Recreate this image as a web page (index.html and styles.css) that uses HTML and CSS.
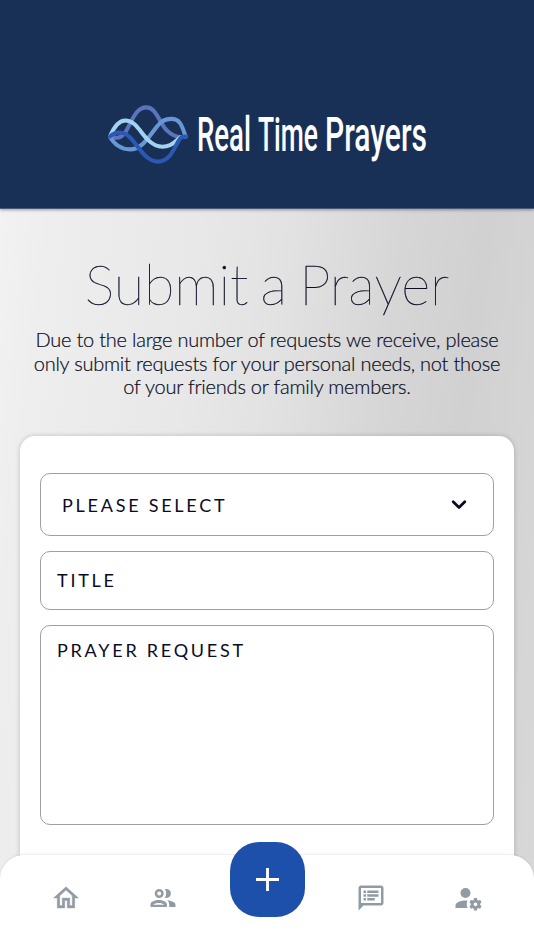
FILE: index.html
```html
<!DOCTYPE html>
<html lang="en">
<head>
<meta charset="utf-8">
<title>Real Time Prayers</title>
<link rel="stylesheet" href="styles.css">
</head>
<body>
<div class="app">
  <header class="header">
    <svg class="mark" viewBox="0 0 240 180" fill="none" stroke-width="12" stroke-linecap="round">
      <path stroke="#5b74bd" d="M5 93C24 99 38 99 51 79C70 49 80 7 112 7C142 7 148 49 172 74C190 92 208 98 228 93"/>
      <path stroke="#6797d5" d="M5 93C17 116 39 131 63 131C102 131 120 91 144 63C153 50 170 41 186 41C215 41 219 69 228 93"/>
      <path stroke="#a3d3f1" d="M5 93C17 64 30 46 50 46C81 46 93 80 117 103C130 116 143 123 160 123C193 123 201 101 214 95"/>
      <path stroke="#2b58b2" d="M5 93C17 81 30 79 44 83C79 91 98 167 147 167C189 167 199 108 216 95L228 93"/>
    </svg>
    <svg class="wordmark" viewBox="0 0 240 60">
      <text x="0" y="39" textLength="54" lengthAdjust="spacingAndGlyphs">Real</text>
      <text x="61" y="39" textLength="60" lengthAdjust="spacingAndGlyphs">Time</text>
      <text x="128" y="39" textLength="102" lengthAdjust="spacingAndGlyphs">Prayers</text>
    </svg>
  </header>
  <main class="main">
    <h1 class="title">Submit a Prayer</h1>
    <p class="intro">Due to the large number of requests we receive, please<br>only submit requests for your personal needs, not those<br>of your friends or family members.</p>
    <form class="card">
      <div class="field select"><span>PLEASE SELECT</span>
        <svg class="chevron" viewBox="0 0 16 12" fill="none"><path d="M2.200 2.700 8 8.400l5.800-5.700" stroke="#0a0a20" stroke-width="2.800" stroke-linecap="round" stroke-linejoin="round"/></svg>
      </div>
      <div class="field input">TITLE</div>
      <div class="field area">PRAYER REQUEST</div>
    </form>
  </main>
  <nav class="nav">
    <a class="item"><svg viewBox="0 0 24 24"><path stroke="#929ba4" stroke-width=".3" d="M12 5.690l5 4.500V18h-2v-6H9v6H7v-7.810l5-4.500M12 3 2 12h3v8h6v-6h2v6h6v-8h3L12 3z"/></svg></a>
    <a class="item"><svg class="people" viewBox="-2.500 -6 30 30"><path fill-rule="evenodd" d="M8.700 0a4.500 4.500 0 1 1 0 9 4.500 4.500 0 0 1 0-9zm0 2.500a2 2 0 1 0 0 4 2 2 0 0 0 0-4zM14.300 .3A4.500 4.500 0 1 1 14.300 8.700C16.200 6.200 16.200 2.800 14.300 .3zM0 18v-2.300C0 12.500 4.500 11 8.200 11s8.200 1.500 8.200 4.700V18zm2.800-2.200h10.800c-.9-1.300-3.200-1.900-5.400-1.900s-4.500.6-5.400 1.900zM16.800 11.200C20.500 11.600 25 13 25 15.700V18h-6.300v-2.300c0-1.900-.7-3.300-1.900-4.500z"/></svg></a>
    <a class="add"><svg viewBox="0 0 24 24"><path d="M10.500 0h3v10.500H24v3H13.500V24h-3V13.500H0v-3h10.500z"/></svg></a>
    <a class="item"><svg class="message" viewBox="0 0 24 24"><path d="M20 2H4c-1.100 0-2 .9-2 2v18l4-4h14c1.100 0 2-.9 2-2V4c0-1.100-.9-2-2-2zm0 14H4V4h16v12zM6 12h2v2H6zM6 9h2v2H6zM6 6h2v2H6zM9 12h6v2H9zM9 9h9v2H9zM9 6h9v2H9z"/></svg></a>
    <a class="item"><svg class="account" viewBox="0 0 24 24"><path d="M10 4a4 4 0 0 1 4 4 4 4 0 0 1-4 4 4 4 0 0 1-4-4 4 4 0 0 1 4-4m7 8a.26.26 0 0 0-.25.210l-.190 1.320c-.3.130-.59.290-.850.470l-1.240-.5c-.110 0-.240 0-.310.130l-1 1.730c-.060.110-.040.240.060.320l1.060.82a4.200 4.200 0 0 0 0 1l-1.060.82a.26.26 0 0 0-.060.320l1 1.730c.060.130.190.130.310.130l1.240-.5c.26.180.540.350.850.470l.190 1.320c.020.120.120.210.250.210h2c.110 0 .220-.090.240-.210l.190-1.320c.3-.130.570-.290.840-.470l1.230.5c.130 0 .260 0 .330-.130l1-1.730a.26.26 0 0 0-.060-.320l-1.070-.82c.020-.170.040-.330.040-.5s-.010-.330-.040-.5l1.060-.82a.26.26 0 0 0 .060-.320l-1-1.730c-.060-.130-.190-.130-.320-.130l-1.230.5c-.27-.180-.540-.350-.850-.470l-.190-1.320A.236.236 0 0 0 19 12h-2m-7 2c-4.420 0-8 1.790-8 4v2h9.680a7 7 0 0 1-.680-3 7 7 0 0 1 .640-2.910c-.530-.060-1.080-.090-1.640-.090m8 1.500c.830 0 1.500.670 1.500 1.500s-.670 1.500-1.500 1.500c-.840 0-1.500-.670-1.500-1.500s.670-1.500 1.500-1.500z"/></svg></a>
  </nav>
</div>
</body>
</html>
```

FILE: styles.css
```css
* { box-sizing: border-box; }
body { margin: 0; font-family: Lato, sans-serif; color: #0a0c24; }
.app { display: flex; flex-direction: column; height: 950px; overflow: hidden; position: relative; }
.header {
  flex: none; height: 209px; padding: 102px 0 0 108px; display: flex; align-items: flex-start; gap: 7px;
  background: #193056; border-bottom: 1px solid #465b7b; box-shadow: 0 1px 3px rgba(0,0,0,.35); z-index: 1;
}
.mark { width: 82px; height: 61px; margin-top: 3px; }
.wordmark { width: 240px; height: 60px; margin-top: 10px; overflow: visible; }
.wordmark text { font: 500 48px Roboto, sans-serif; fill: #fff; }
.main {
  flex: 1; min-height: 0; padding: 45px 20px 0;
  background: linear-gradient(97deg, #f2f2f2 0%, #eee 8%, #e8e8e8 32%, #e2e2e2 47%, #d6d6d6 65%, #d1d1d1 78%, #d8d8d8 100%);
}
.title { margin: 0; text-align: center; font-size: 56px; line-height: 60px; font-weight: 100; letter-spacing: -.1px; word-spacing: -3.500px; -webkit-text-stroke: .35px #0a0c24; }
.intro { margin: 14px -10px 0; text-align: center; font-size: 20px; line-height: 23.700px; font-weight: 300; letter-spacing: -.22px; white-space: nowrap; -webkit-text-stroke: .2px #0a0c24; }
.card {
  margin-top: 37px; height: 560px; padding: 37px 20px; display: flex; flex-direction: column; gap: 15px;
  background: #fff; border-radius: 15px; box-shadow: 0 0 5px rgba(0,0,0,.2);
}
.field { flex: none; border: 1px solid #a0a0a0; border-radius: 10px; font-size: 18px; line-height: 22px; letter-spacing: 2.750px; font-weight: 400; }
.select { height: 62.500px; padding: 1px 26px 0 21px; display: flex; align-items: center; justify-content: space-between; }
.chevron { width: 16px; height: 12px; }
.input { height: 59.500px; padding: 17.500px 16px; }
.area { height: 199.500px; padding: 12.500px 16px; }
.nav {
  position: absolute; left: 0; right: 0; bottom: 0; height: 95px; z-index: 2; padding: 0 17.500px;
  display: grid; grid-template-columns: 97.300px 97.300px 1fr 97.300px 97.300px; justify-items: center;
  background: #fff; border-radius: 24px 24px 0 0; box-shadow: 0 -1px 2px rgba(0,0,0,.08);
}
.item { padding-top: 28px; }
.item svg { display: block; width: 30px; height: 30px; fill: #929ba4; }
.add { width: 75px; height: 75px; margin-top: -13px; border-radius: 29px; background: #1c50ab; display: flex; align-items: center; justify-content: center; }
.add svg { width: 23px; height: 23px; fill: #fff; }
```
